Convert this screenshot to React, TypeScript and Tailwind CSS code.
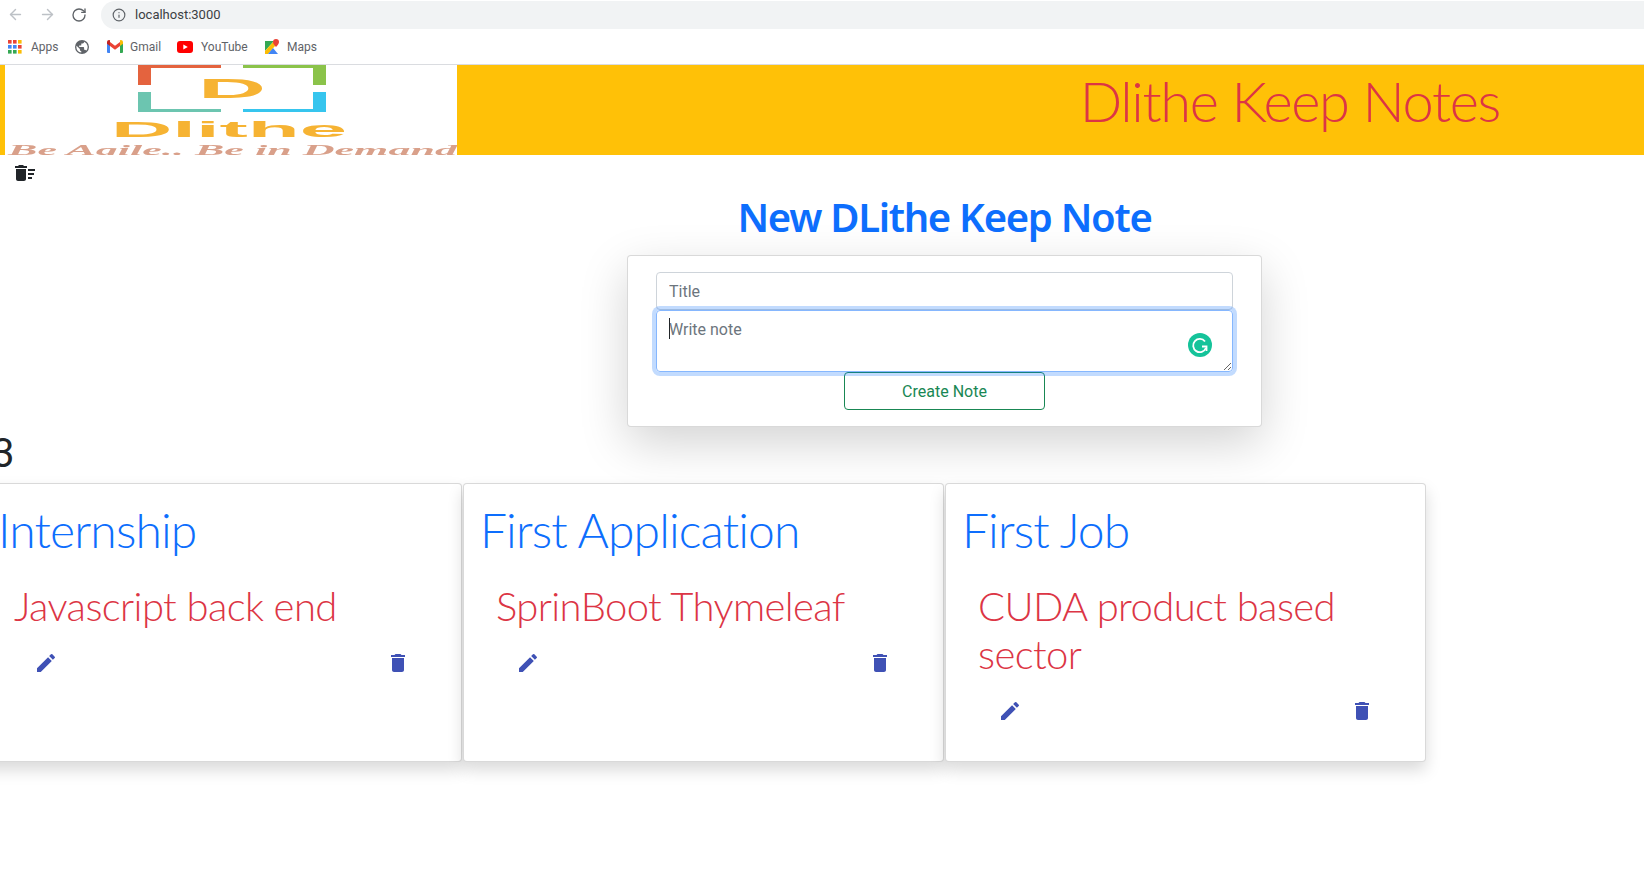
import { ArrowLeft, ArrowRight, Info, RotateCw } from "lucide-react";
import { MdDelete, MdDeleteSweep, MdEdit } from "react-icons/md";

const appDots = ["#ea4335", "#ea4335", "#fbbc04", "#4285f4", "#4285f4", "#ea4335", "#34a853", "#34a853", "#fbbc04"];

function AppsIcon() {
  return (
    <svg width="14" height="14" viewBox="0 0 14 14">
      {appDots.map((color, i) => (
        <rect key={i} x={(i % 3) * 5} y={Math.floor(i / 3) * 5} width="3.6" height="3.6" fill={color} />
      ))}
    </svg>
  );
}

function GlobeIcon() {
  return (
    <svg width="14" height="14" viewBox="0 0 24 24">
      <path
        fill="#5f6368"
        d="M12 0a12 12 0 1 0 0 24 12 12 0 0 0 0-24zm-1.2 21.5A9.6 9.6 0 0 1 2.4 12c0-.7.1-1.4.3-2.1l5.7 5.7v1.2c0 1.3 1.1 2.4 2.4 2.4v2.3zm8.3-3a2.4 2.4 0 0 0-2.3-1.7h-1.2v-3.6c0-.7-.5-1.2-1.2-1.2H7.2V9.6h2.4c.7 0 1.2-.5 1.2-1.2V6h2.4c1.3 0 2.4-1.1 2.4-2.4v-.5a9.6 9.6 0 0 1 3.5 15.4z"
      />
    </svg>
  );
}

function GmailIcon() {
  return (
    <svg width="16" height="13" viewBox="0 0 16 13">
      <path fill="#4285f4" d="M0 2h3v11H1a1 1 0 0 1-1-1z" />
      <path fill="#34a853" d="M13 2h3v10a1 1 0 0 1-1 1h-2z" />
      <path fill="#ea4335" d="M3 2v4l5 3.8L13 6V2L8 5.8z" />
      <path fill="#c5221f" d="M0 2.2C0 .5 2 -.5 3 .5V6L0 3.7z" />
      <path fill="#fbbc04" d="M16 2.2c0-1.7-2-2.7-3-1.7V6l3-2.3z" />
    </svg>
  );
}

function YoutubeIcon() {
  return (
    <svg width="16" height="12" viewBox="0 0 16 12">
      <rect width="16" height="12" rx="3" fill="#ff0000" />
      <path fill="#fff" d="M6.3 3.4 10.8 6 6.3 8.6z" />
    </svg>
  );
}

function MapsIcon() {
  return (
    <svg width="16" height="16" viewBox="0 0 16 16">
      <path fill="#34a853" d="M1 2h9L1 12z" />
      <path fill="#fbbc04" d="M1 12 10 2l1 5-7 8H1z" />
      <path fill="#4285f4" d="M4 15l5-6 5 6z" />
      <path fill="#ea4335" d="M12 0a3 3 0 0 0-3 3c0 2 3 5 3 5s3-3 3-5a3 3 0 0 0-3-3z" />
    </svg>
  );
}

function Bookmark({ icon, label, className }: { icon: React.ReactNode; label: string; className: string }) {
  return (
    <div className={`flex items-center ${className}`}>
      {icon}
      {label && <span className="text-[12px] text-[#5f6368]">{label}</span>}
    </div>
  );
}

function Logo() {
  return (
    <svg width="452" height="90" viewBox="0 0 452 90" className="shrink-0 bg-white">
      <g className="blur-[0.7px]">
        <path fill="#e4633e" d="M133 0h83v3h-70v17h-13z" />
        <path fill="#8bc34a" d="M238 0h83v20h-13V3h-70z" />
        <path fill="#6cc5b0" d="M133 27h13v17h70v3h-83z" />
        <path fill="#36c5ee" d="M308 27h13v20h-83v-3h70z" />
        <text x="193" y="33" fontSize="28" fontWeight="700" textLength="68" lengthAdjust="spacingAndGlyphs" fill="#f6b333" fontFamily="'Liberation Sans', sans-serif">
          D
        </text>
        <text x="106" y="72" fontSize="22" fontWeight="700" textLength="236" lengthAdjust="spacingAndGlyphs" fill="#f6b333" fontFamily="'Liberation Sans', sans-serif">
          Dlithe
        </text>
        <text x="3" y="90" fontSize="14" fontStyle="italic" fontWeight="700" textLength="449" lengthAdjust="spacingAndGlyphs" fill="#d9a08a" fontFamily="'Liberation Serif', serif">
          Be Agile.. Be in Demand
        </text>
      </g>
    </svg>
  );
}

function GrammarlyIcon() {
  return (
    <svg width="24" height="24" viewBox="0 0 24 24" className="absolute right-[21px] top-[23px]">
      <circle cx="12" cy="12" r="12" fill="#15c39a" />
      <path d="M17 8.5a6.6 6.6 0 1 0 .9 6.5" fill="none" stroke="#fff" strokeWidth="1.8" />
      <path d="M14 13.5h4.5V18" fill="none" stroke="#fff" strokeWidth="1.8" />
    </svg>
  );
}

function NoteCard({ title, body }: { title: string; body: string }) {
  return (
    <div className="h-[279px] w-[481px] shrink-0 rounded-[4px] border border-black/15 bg-white px-4 pt-[17px] pb-4 shadow-[0_8px_16px_rgba(0,0,0,0.15)]">
      <h5 className="font-['Lato',sans-serif] text-[48px] leading-[58px] font-light tracking-[-0.85px] text-[#0d6efd]">{title}</h5>
      <p className="mt-[23px] pl-[16px] font-['Lato',sans-serif] text-[40px] leading-[48px] font-light tracking-[-0.6px] text-[#dc3545]">{body}</p>
      <div className="mt-[21px] flex justify-between pr-[35px] pl-[36px]">
        <MdEdit className="text-[#3f51b5]" size={24} />
        <MdDelete className="text-[#3f51b5]" size={24} />
      </div>
    </div>
  );
}

export default function App() {
  return (
    <div className="h-[873px] w-full overflow-hidden bg-white font-['Roboto',sans-serif] text-[#212529]">
      <div className="flex h-[29px] items-center bg-white pl-[7px]">
        <ArrowLeft className="text-[#bdc1c6]" size={17} />
        <ArrowRight className="ml-[15px] text-[#bdc1c6]" size={17} />
        <RotateCw className="ml-[15px] text-[#5f6368]" size={16} />
        <div className="ml-[14px] flex h-[28px] flex-1 items-center rounded-l-full bg-[#f1f3f4] pl-[11px]">
          <Info className="text-[#5f6368]" size={14} />
          <span className="ml-[9px] text-[13px] text-[#3c4043]">localhost:3000</span>
        </div>
      </div>
      <div className="flex h-[36px] items-center border-b border-[#dadce0] pl-[8px]">
        <Bookmark icon={<AppsIcon />} label="Apps" className="w-[67px] gap-[9px]" />
        <Bookmark icon={<GlobeIcon />} label="" className="w-[32px]" />
        <Bookmark icon={<GmailIcon />} label="Gmail" className="w-[70px] gap-[7px]" />
        <Bookmark icon={<YoutubeIcon />} label="YouTube" className="w-[87px] gap-[8px]" />
        <Bookmark icon={<MapsIcon />} label="Maps" className="gap-[7px]" />
      </div>

      <header className="flex h-[90px] bg-[#ffc107] pl-[5px]">
        <Logo />
        <h1 className="flex-1 pt-[1px] pr-[144px] text-right font-['Lato',sans-serif] text-[56px] leading-[70px] font-light tracking-[-1.35px] text-[#dc3545]">
          Dlithe Keep Notes
        </h1>
      </header>

      <div className="pt-[6px] pl-[13px]">
        <MdDeleteSweep className="text-[#212529]" size={24} />
      </div>

      <section className="mt-[8px] ml-[627px] w-[635px]">
        <h2 className="text-center font-['Noto_Sans',sans-serif] text-[40px] leading-[48px] font-semibold tracking-[-1.3px] text-[#0d6efd]">
          New DLithe Keep Note
        </h2>
        <div className="mt-[14px] h-[172px] rounded-[4px] border border-black/15 bg-white px-[28px] pt-[16px] shadow-[0_16px_48px_rgba(0,0,0,0.175)]">
          <input
            placeholder="Title"
            className="block h-[38px] w-full rounded-[4px] border border-[#ced4da] px-3 text-[16px] outline-none placeholder:text-[#6c757d]"
          />
          <div className="relative">
            <textarea
              placeholder="Write note"
              className="block h-[62px] w-full rounded-[4px] border border-[#86b7fe] px-3 py-[7px] text-[16px] shadow-[0_0_0_4px_rgba(13,110,253,0.25)] outline-none placeholder:text-[#6c757d]"
            />
            <span className="absolute top-[8px] left-[13px] h-[21px] w-px bg-[#212529]" />
            <GrammarlyIcon />
          </div>
          <button className="mx-auto block h-[38px] w-[201px] rounded-[4px] border border-[#198754] bg-white pt-[2px] text-[16px] text-[#198754]">
            Create Note
          </button>
        </div>
      </section>

      <div className="mb-[2px] -ml-[8px] text-[40px] leading-[54px]">3</div>

      <div className="-ml-[19px] flex gap-px">
        <NoteCard title="Internship" body="Javascript back end" />
        <NoteCard title="First Application" body="SprinBoot Thymeleaf" />
        <NoteCard title="First Job" body="CUDA product based sector" />
      </div>
    </div>
  );
}
